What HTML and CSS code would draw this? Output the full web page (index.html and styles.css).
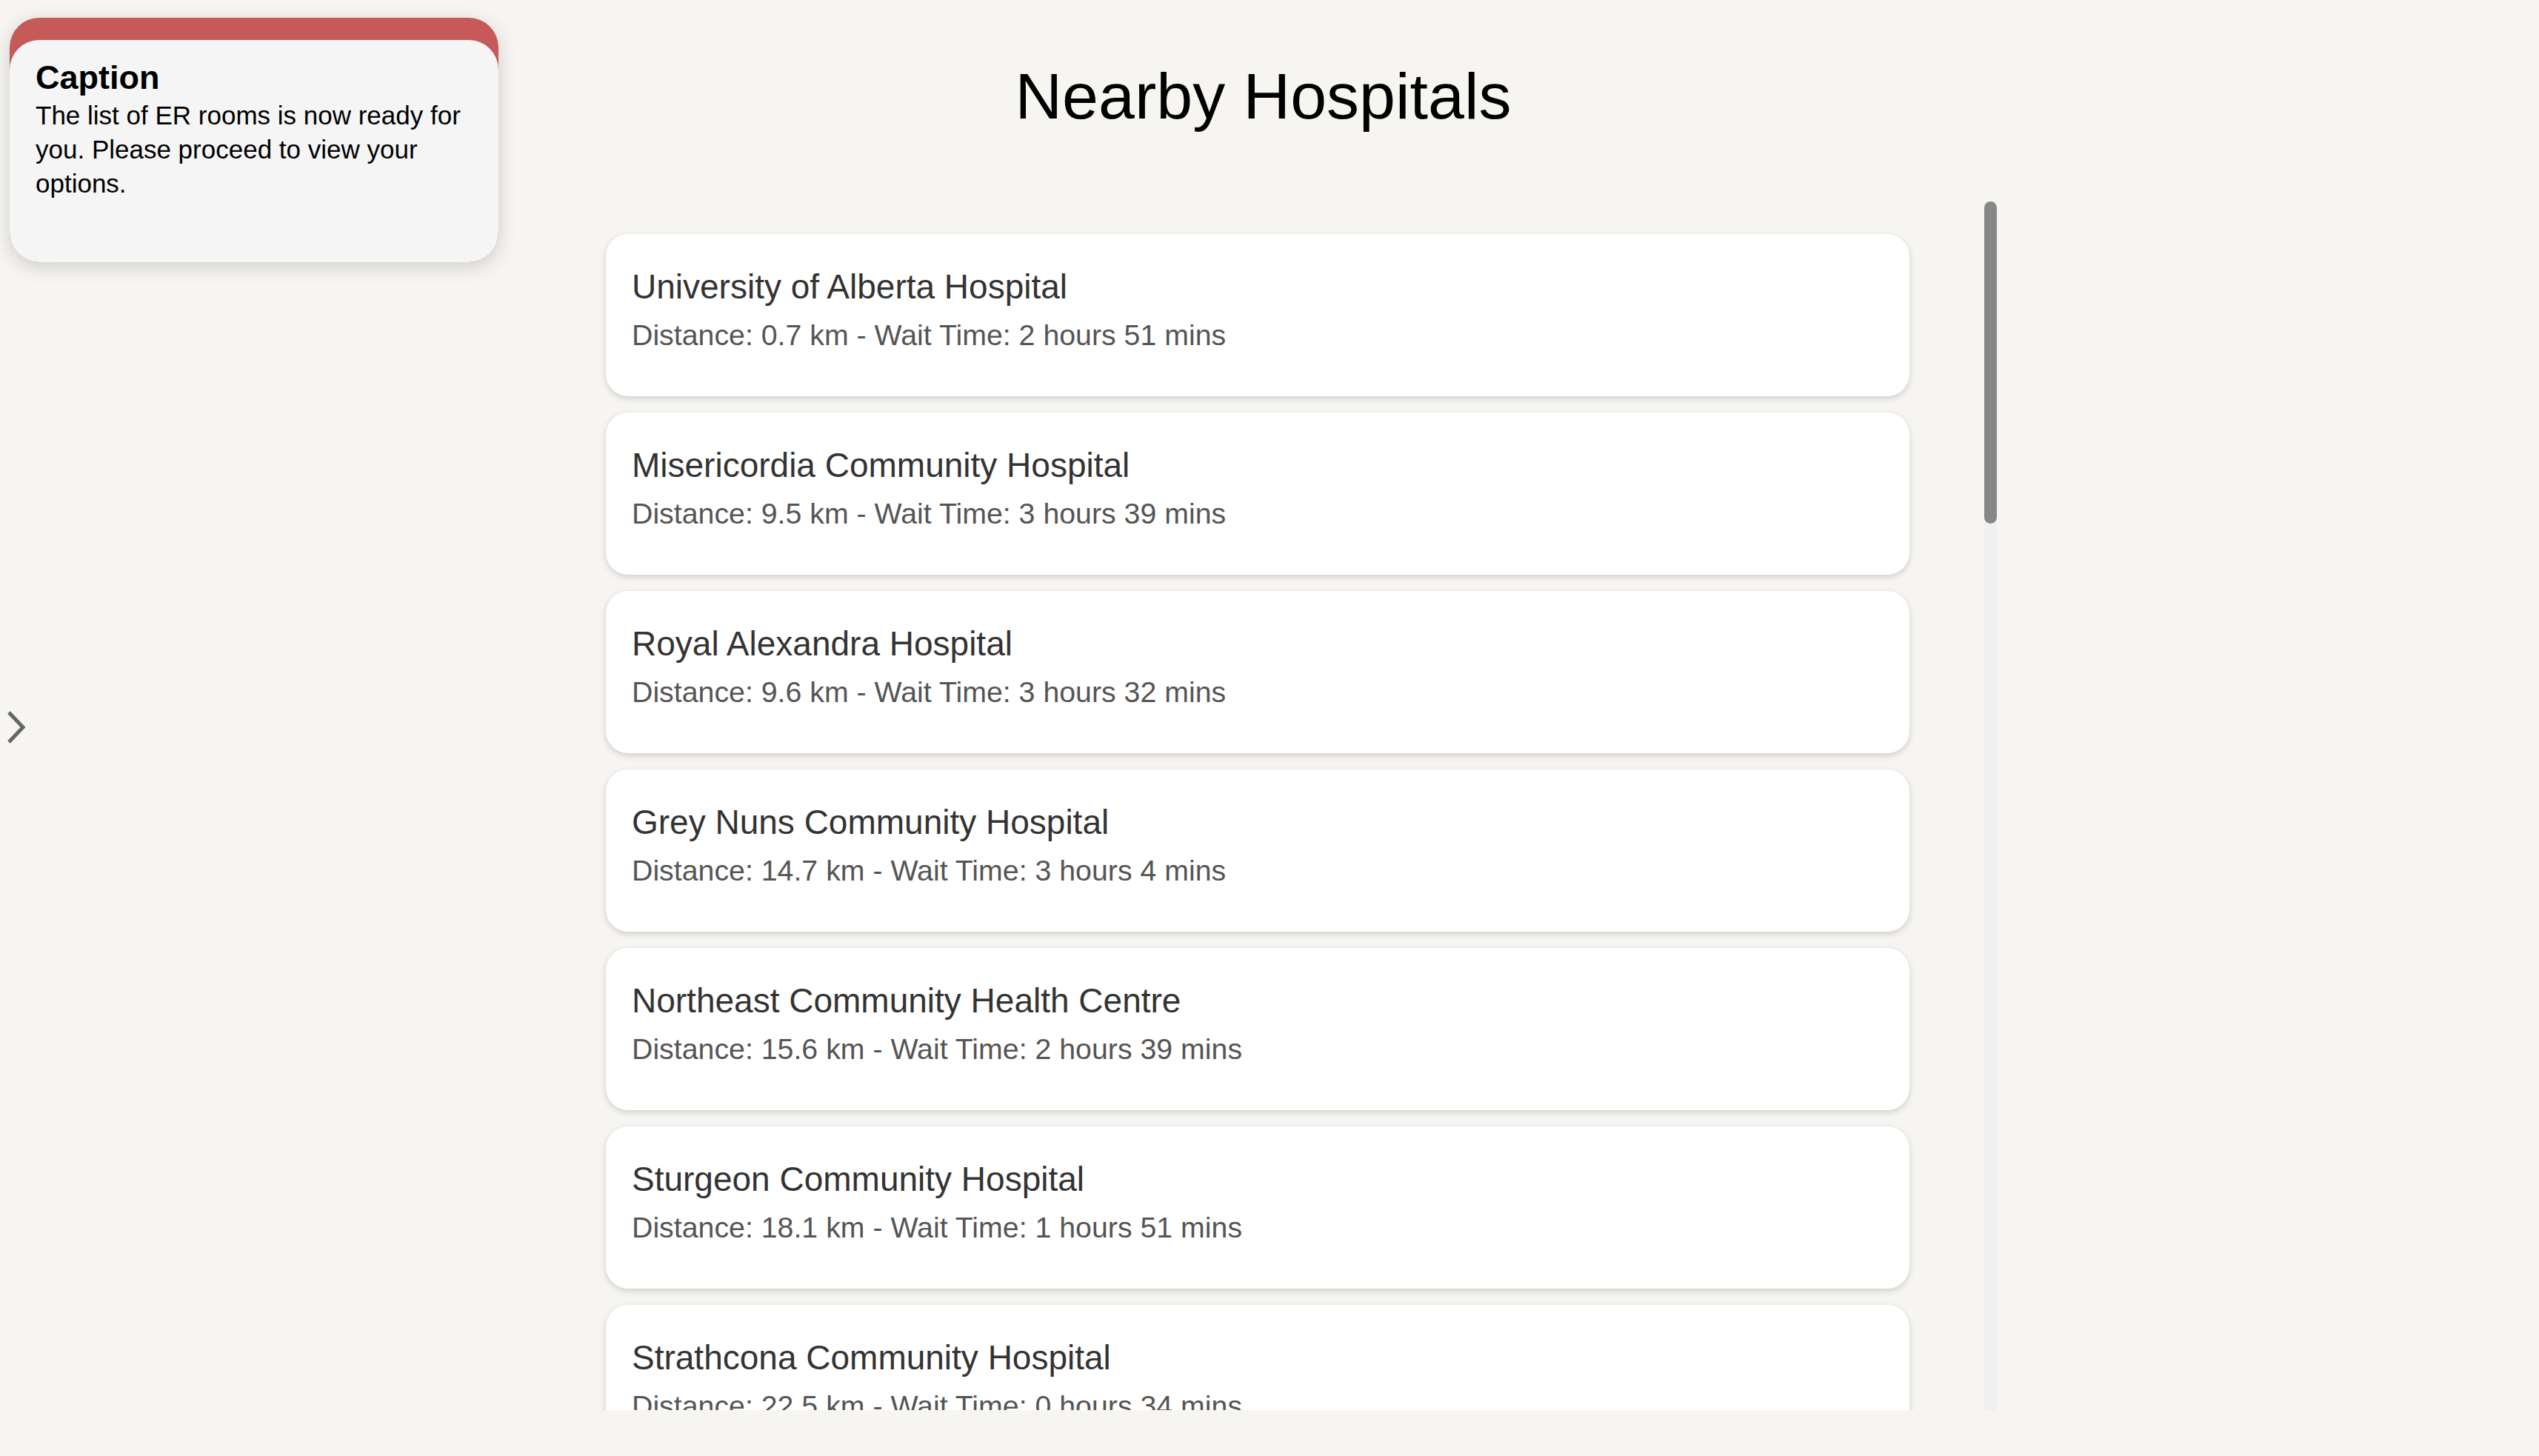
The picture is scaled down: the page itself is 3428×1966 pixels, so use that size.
FILE: index.html
```html
<!DOCTYPE html>
<html lang="en">
<head>
  <meta charset="UTF-8">
  <meta name="viewport" content="width=device-width, initial-scale=1.0">
  <title>Nearby Hospitals</title>
  <link rel="stylesheet" href="styles.css">
</head>
<body>
  <!-- Caption popup -->
  <div class="caption">
    <div class="caption-body">
      <h2>Caption</h2>
      <p>The list of ER rooms is now ready for you. Please proceed to view your options.</p>
    </div>
  </div>

  <!-- Sidebar toggle -->
  <button class="side-toggle" aria-label="Open sidebar">
    <svg width="24" height="44" viewBox="0 0 24 44">
      <polyline points="2,2 21,22 2,42" fill="none" stroke="#666" stroke-width="5"/>
    </svg>
  </button>

  <div class="main">
    <h1 class="title">Nearby Hospitals</h1>

    <div class="list-wrap">
      <ul class="hospital-list">
        <li class="hospital">
          <h3>University of Alberta Hospital</h3>
          <p>Distance: 0.7 km - Wait Time: 2 hours 51 mins</p>
        </li>
        <li class="hospital">
          <h3>Misericordia Community Hospital</h3>
          <p>Distance: 9.5 km - Wait Time: 3 hours 39 mins</p>
        </li>
        <li class="hospital">
          <h3>Royal Alexandra Hospital</h3>
          <p>Distance: 9.6 km - Wait Time: 3 hours 32 mins</p>
        </li>
        <li class="hospital">
          <h3>Grey Nuns Community Hospital</h3>
          <p>Distance: 14.7 km - Wait Time: 3 hours 4 mins</p>
        </li>
        <li class="hospital">
          <h3>Northeast Community Health Centre</h3>
          <p>Distance: 15.6 km - Wait Time: 2 hours 39 mins</p>
        </li>
        <li class="hospital">
          <h3>Sturgeon Community Hospital</h3>
          <p>Distance: 18.1 km - Wait Time: 1 hours 51 mins</p>
        </li>
        <li class="hospital">
          <h3>Strathcona Community Hospital</h3>
          <p>Distance: 22.5 km - Wait Time: 0 hours 34 mins</p>
        </li>
      </ul>
      <!-- scrollbar (browser hides native one) -->
      <div class="scroll-track">
        <div class="scroll-thumb"></div>
      </div>
    </div>
  </div>
</body>
</html>
```

FILE: styles.css
```css
body {
  font-family: "Liberation Sans", Arial, sans-serif;
  background-color: #f7f5f1;
  margin: 0;
  padding: 0;
  overflow: hidden;
}

/* caption popup */
.caption {
  position: fixed;
  top: 24px;
  left: 13px;
  width: 660px;
  height: 330px;
  padding-top: 30px;
  box-sizing: border-box;
  background-color: #c55a58;
  border-radius: 40px;
  overflow: hidden;
  box-shadow: 0 6px 26px rgba(0, 0, 0, 0.16);
  z-index: 10;
}
.caption-body {
  height: 100%;
  background-color: #f5f5f5;
  border-radius: 40px 40px 0 0;
  padding: 26px 35px 0;
  box-sizing: border-box;
  color: #000;
}
.caption-body h2 {
  margin: 0;
  font-size: 45px;
  line-height: 50px;
  font-weight: bold;
}
.caption-body p {
  margin: 3px 0 0;
  font-size: 35px;
  line-height: 46px;
}

.side-toggle {
  position: fixed;
  left: 10px;
  top: 960px;
  padding: 0;
  border: none;
  background: none;
  cursor: pointer;
}

/* main column */
.main {
  width: 1964px;
  margin: 0 auto;
}
.title {
  margin: 0;
  padding: 80px 17px 0 0;
  font-size: 88px;
  line-height: 100px;
  font-weight: 300;
  color: #000;
  text-align: center;
}
.list-wrap {
  position: relative;
  margin-top: 92px;
  height: 1632px;
}
.hospital-list {
  list-style: none;
  margin: 0;
  padding: 44px 118px 44px 86px;
  height: 100%;
  box-sizing: border-box;
  overflow: hidden;
  display: flex;
  flex-direction: column;
  gap: 22px;
}
.scroll-track {
  position: absolute;
  top: 0;
  right: 0;
  width: 17px;
  height: 100%;
  background-color: #f0f0f0;
}
.scroll-thumb {
  height: 435px;
  background-color: #878787;
  border-radius: 9px;
}
.hospital {
  flex-shrink: 0;
  height: 219px;
  box-sizing: border-box;
  padding: 44px 35px 0;
  background-color: #fff;
  border-radius: 30px;
  box-shadow: 0 3px 8px rgba(0, 0, 0, 0.16);
}
.hospital h3 {
  margin: 0;
  font-size: 46px;
  line-height: 54px;
  font-weight: normal;
  color: #333;
}
.hospital p {
  margin: 15px 0 0;
  font-size: 39.3px;
  line-height: 47px;
  color: #555;
}
```
